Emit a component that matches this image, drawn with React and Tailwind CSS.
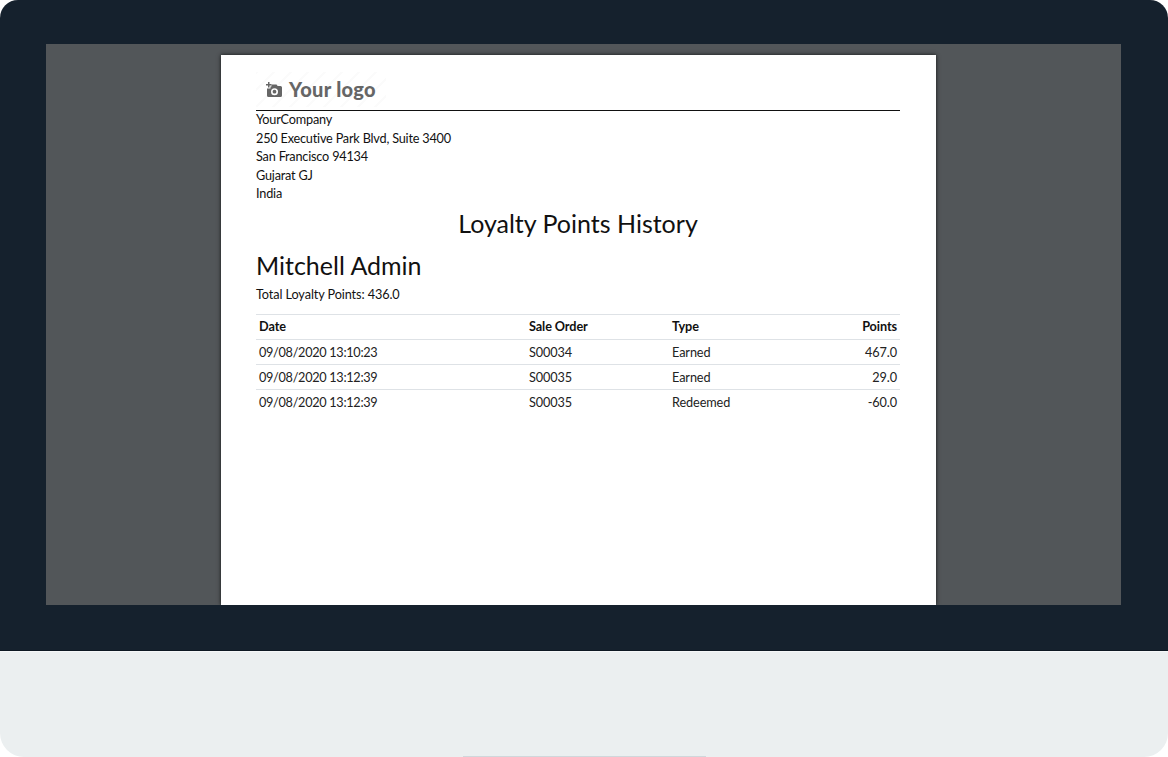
const rows = [
  { date: '09/08/2020 13:10:23', order: 'S00034', type: 'Earned', points: '467.0' },
  { date: '09/08/2020 13:12:39', order: 'S00035', type: 'Earned', points: '29.0' },
  { date: '09/08/2020 13:12:39', order: 'S00035', type: 'Redeemed', points: '-60.0' },
];

const address = [
  'YourCompany',
  '250 Executive Park Blvd, Suite 3400',
  'San Francisco 94134',
  'Gujarat GJ',
  'India',
];

const CameraIcon = () => (
  <svg width="18" height="16" viewBox="0 0 18 16" fill="#666666">
    <path d="M3 0h1.5v2H6.5v1.5H4.5v2H3v-2H1V2h2z" />
    <path fillRule="evenodd" d="M6.5 2.5h5l1.2 1.5H15.500a1.500 1.500 0 0 1 1.500 1.500v8a1.500 1.500 0 0 1-1.500 1.500H3.500a1.500 1.500 0 0 1-1.500-1.500V6.500h3.500V4.500h1zM9.500 6.200a3.500 3.500 0 1 0 0 7 3.500 3.500 0 0 0 0-7zm0 1.600a1.900 1.900 0 1 1 0 3.800 1.900 1.900 0 0 1 0-3.800z" />
  </svg>
);

const Logo = () => (
  <div className="flex h-[35px] w-[130px] items-center gap-[6px] bg-[repeating-linear-gradient(135deg,#fbfbfb_0,#fbfbfb_2px,#ffffff_2px,#ffffff_12px)] pl-[9px]">
    <CameraIcon />
    <span className="-mt-[2px] font-['Lato',sans-serif] text-[20px] font-black leading-none tracking-[0.3px] text-[#666666]">Your logo</span>
  </div>
);

const App = () => {
  return (
    <div className="h-[757px] w-[1168px] overflow-hidden bg-white font-['Lato',sans-serif] text-[12.7px] tracking-[-0.1px] text-[#111111]">
      <div className="h-[651px] rounded-t-[18px] border-b border-[#0d1822] bg-[#15212d] px-[46px] pt-[44px]">
        <div className="flex h-[561px] w-[1075px] justify-center overflow-hidden bg-[#525659] pr-[10px]">
          <div className="mt-[11px] h-[550px] w-[715px] bg-white pl-[35px] pr-[36px] shadow-[0_0_4px_rgba(0,0,0,0.8)]">
            <div className="mt-[17px] border-b border-[#111111] pb-[3px]">
              <Logo />
            </div>
            <div className="-mt-[1px] leading-[18.5px] tracking-[-0.2px]">
              {address.map((line) => (
                <div key={line}>{line}</div>
              ))}
            </div>
            <h1 className="mt-[6px] text-center text-[25px] leading-[29px] tracking-normal">Loyalty Points History</h1>
            <h2 className="mt-[12px] text-[25px] leading-[31px] tracking-normal">Mitchell Admin</h2>
            <p className="mt-[4px] leading-[18px]">Total Loyalty Points: 436.0</p>
            <table className="mt-[11px] w-full border-collapse">
              <thead>
                <tr className="h-[25px] border-y border-[#dee2e6]">
                  <th className="w-[270px] px-[3px] text-left font-bold">Date</th>
                  <th className="w-[143px] px-[3px] text-left font-bold">Sale Order</th>
                  <th className="px-[3px] text-left font-bold">Type</th>
                  <th className="px-[3px] text-right font-bold">Points</th>
                </tr>
              </thead>
              <tbody>
                {rows.map((row, i) => (
                  <tr key={i} className={i < rows.length - 1 ? 'h-[25px] border-b border-[#dee2e6] text-[#222222]' : 'h-[25px] border-b border-transparent text-[#222222]'}>
                    <td className="px-[3px] pt-[2px] tracking-[-0.3px]">{row.date}</td>
                    <td className="px-[3px] pt-[2px]">{row.order}</td>
                    <td className="px-[3px] pt-[2px]">{row.type}</td>
                    <td className="px-[3px] pt-[2px] text-right">{row.points}</td>
                  </tr>
                ))}
              </tbody>
            </table>
          </div>
        </div>
      </div>
      <div className="relative h-[106px] rounded-b-[24px] border-t border-[#f5f7f8] bg-[#ebeff0]">
        <div className="absolute bottom-0 left-[463px] h-px w-[243px] bg-[#d0d7db]" />
      </div>
    </div>
  );
};

export default App;
